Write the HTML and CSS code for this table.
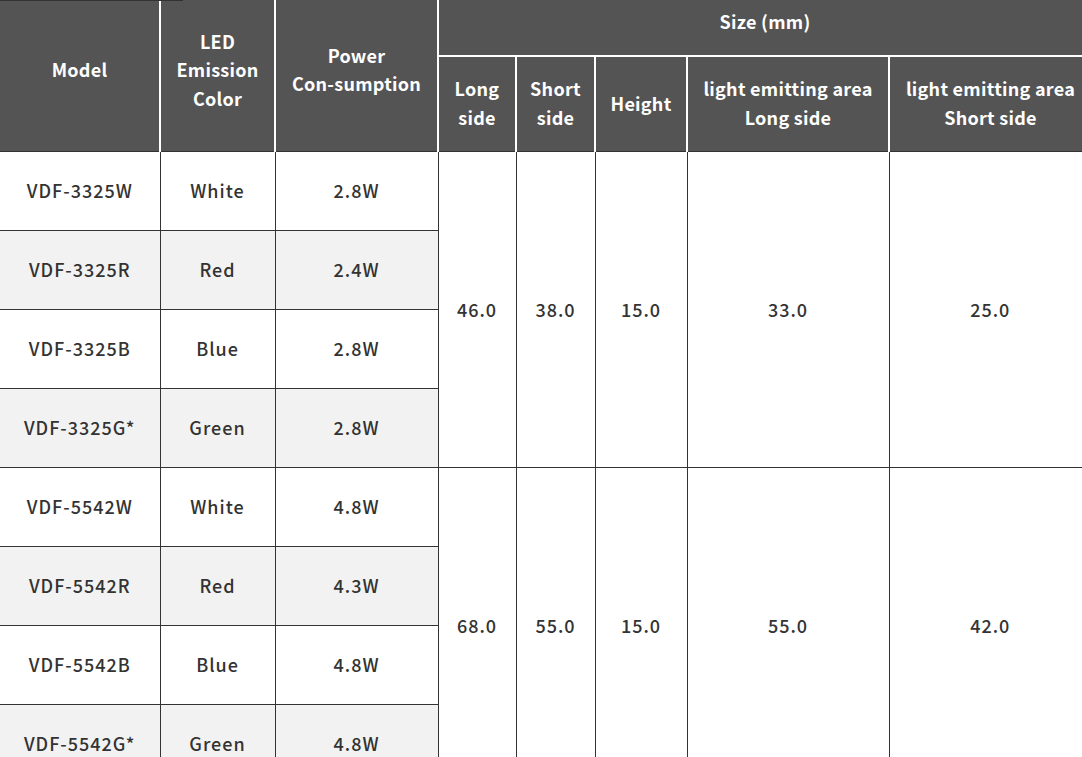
FILE: index.html
```html
<!DOCTYPE html>
<html lang="en">
<head>
<meta charset="utf-8">
<title>VDF specifications</title>
<link rel="stylesheet" href="styles.css">
</head>
<body>
<div class="topline"></div>
<div class="wrap">
<table class="spec">
  <colgroup>
    <col class="c-model"><col class="c-color"><col class="c-power"><col class="c-long"><col class="c-short"><col class="c-height"><col class="c-lea"><col class="c-lea">
  </colgroup>
  <thead>
    <tr class="h1">
      <th rowspan="2">Model</th>
      <th rowspan="2">LED<br>Emission<br>Color</th>
      <th rowspan="2">Power<br>Con-sumption</th>
      <th colspan="5">Size (mm)</th>
    </tr>
    <tr class="h2">
      <th>Long<br>side</th>
      <th>Short<br>side</th>
      <th>Height</th>
      <th>light emitting area<br>Long side</th>
      <th>light emitting area<br>Short side</th>
    </tr>
  </thead>
  <tbody>
    <tr><td>VDF-3325W</td><td>White</td><td>2.8W</td><td rowspan="4" class="m">46.0</td><td rowspan="4" class="m">38.0</td><td rowspan="4" class="m">15.0</td><td rowspan="4" class="m">33.0</td><td rowspan="4" class="m">25.0</td></tr>
    <tr class="alt"><td>VDF-3325R</td><td>Red</td><td>2.4W</td></tr>
    <tr><td>VDF-3325B</td><td>Blue</td><td>2.8W</td></tr>
    <tr class="alt"><td>VDF-3325G*</td><td>Green</td><td>2.8W</td></tr>
    <tr><td>VDF-5542W</td><td>White</td><td>4.8W</td><td rowspan="4" class="m">68.0</td><td rowspan="4" class="m">55.0</td><td rowspan="4" class="m">15.0</td><td rowspan="4" class="m">55.0</td><td rowspan="4" class="m">42.0</td></tr>
    <tr class="alt"><td>VDF-5542R</td><td>Red</td><td>4.3W</td></tr>
    <tr><td>VDF-5542B</td><td>Blue</td><td>4.8W</td></tr>
    <tr class="alt"><td>VDF-5542G*</td><td>Green</td><td>4.8W</td></tr>
  </tbody>
</table>
</div>
</body>
</html>
```
FILE: styles.css
```css
html, body {
  margin: 0;
  padding: 0;
  overflow: hidden;
  background: #fff;
}
.topline {
  position: absolute;
  left: 0;
  top: 0;
  width: 183px;
  height: 1px;
  background: #333;
  z-index: 2;
}
.wrap {
  margin-top: -12px;
}
.spec {
  width: 1091px;
  table-layout: fixed;
  border-collapse: collapse;
  border-style: hidden;
  font-family: "Noto Sans CJK JP", "Noto Sans", sans-serif;
  font-size: 18px;
  line-height: 28.5px;
  color: #333;
}
.c-model { width: 160px; }
.c-color { width: 115px; }
.c-power { width: 163px; }
.c-long { width: 78px; }
.c-short { width: 79px; }
.c-height { width: 92px; }
.c-lea { width: 202px; }
.spec th {
  background: #545454;
  color: #fff;
  font-weight: 700;
  letter-spacing: 0.015em;
  border: 2px solid #fff;
  padding: 0;
  text-align: center;
  vertical-align: middle;
}
.spec .h1 { height: 68px; }
.spec .h2 { height: 95px; }
.spec .h2 th { border-bottom: 1px solid #333; padding-bottom: 2px; }
.spec thead .h1 th[rowspan] { border-bottom: 1px solid #333; }
.spec td {
  border: 1px solid #333;
  padding: 0;
  height: 78px;
  text-align: center;
  vertical-align: middle;
  font-weight: 500;
  letter-spacing: 0.055em;
  background: #fff;
}
.spec tr.alt td { background: #f2f2f2; }
.spec td.m { background: #fff; }
```
